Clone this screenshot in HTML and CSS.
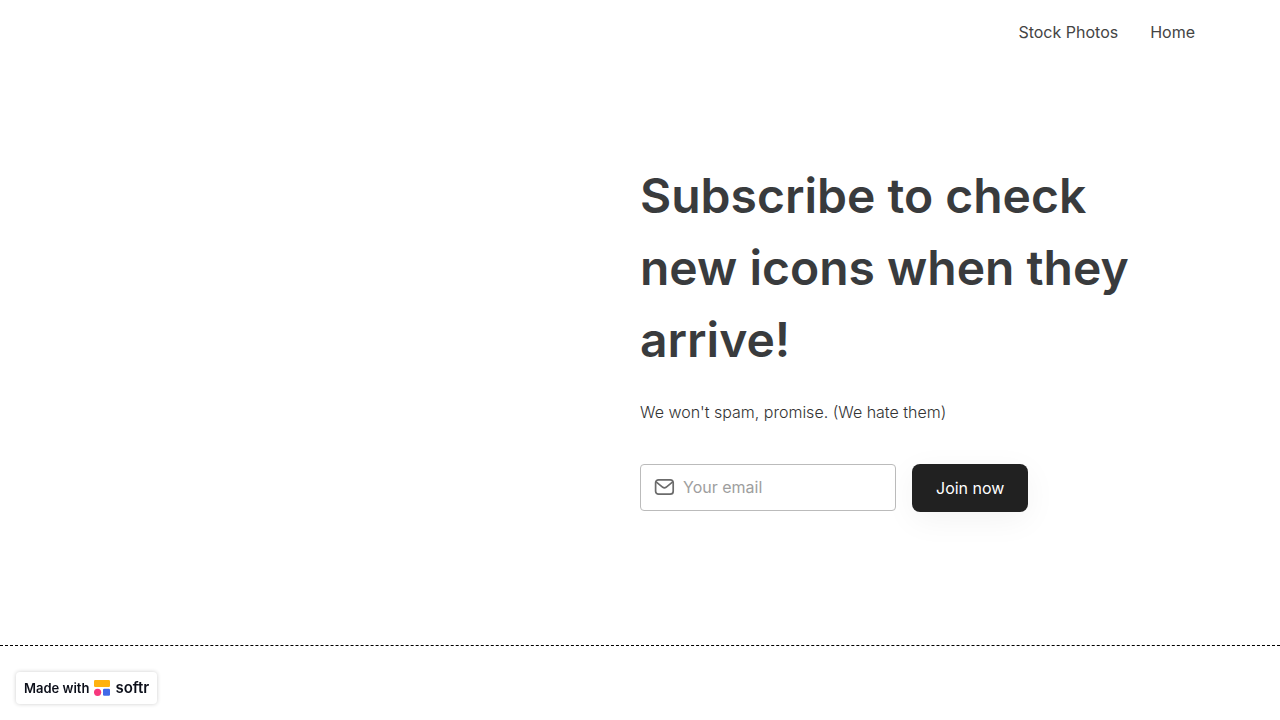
FILE: index.html
```html
<!DOCTYPE html>
<html lang="en">
<head>
    <meta charset="UTF-8">
    <meta name="viewport" content="width=device-width, initial-scale=1.0">
    <title>Subscribe</title>
    <link rel="stylesheet" href="styles.css">
</head>
<body>

    <header class="header">
        <nav class="nav">
            <a href="#">Stock Photos</a>
            <a href="#">Home</a>
        </nav>
    </header>

    <main class="hero">
        <div class="hero-content">
            <h1>Subscribe to check new icons when they arrive!</h1>
            <p>We won't spam, promise. (We hate them)</p>

            <form class="subscribe-form">
                <label class="email-field" for="email">
                    <svg width="22" height="22" viewBox="0 0 22 22" fill="none" stroke="#6b6b6b" stroke-width="1.7" stroke-linejoin="round" stroke-linecap="round" aria-hidden="true">
                        <rect x="2.6" y="3.8" width="17.6" height="14.4" rx="3"/>
                        <path d="M3.4 6.2l6.4 5.1q1.6 1.2 3.2 0l6.4-5.1"/>
                    </svg>
                    <input type="email" id="email" placeholder="Your email" aria-label="Your email" required>
                </label>
                <button type="submit" class="join-btn">Join now</button>
            </form>
        </div>
    </main>

    <footer class="footer"></footer>

    <!-- Badge stays in the corner while scrolling -->
    <a class="badge" href="#">
        <span>Made with</span>
        <svg width="16" height="16" viewBox="0 0 16 16" aria-hidden="true">
            <rect width="16" height="7" rx="1.2" fill="#ffb20f"/>
            <circle cx="3.6" cy="12.3" r="3.6" fill="#f7387d"/>
            <rect x="9" y="8.8" width="7" height="7" rx="1.2" fill="#4169e8"/>
        </svg>
        <span class="badge-name">softr</span>
    </a>

</body>
</html>
```

FILE: styles.css
```css
* {
    box-sizing: border-box;
}
body {
    font-family: Inter, "Liberation Sans", sans-serif;
    font-size: 16px;
    line-height: 24px;
    margin: 0;
    background-color: white;
    color: #393b3d;
}
.header {
    padding: 20px 85px;
}
.nav {
    display: flex;
    justify-content: flex-end;
    gap: 32px;
}
.nav a {
    color: #444;
    text-decoration: none;
}
.hero {
    display: grid;
    grid-template-columns: 1fr 1fr;
    padding: 96px 0 133px;
}
.hero-content {
    grid-column: 2;
    padding-right: 120px;
}
.hero h1 {
    margin: 0 0 24px;
    font-size: 48px;
    font-weight: 600;
    line-height: 72px;
}
.hero p {
    margin: 0 0 40px;
    font-weight: 300;
    color: #333;
}
.subscribe-form {
    display: flex;
    align-items: flex-start;
    gap: 16px;
}
.email-field {
    display: flex;
    align-items: center;
    gap: 8px;
    width: 256px;
    height: 47px;
    padding: 0 12px 1px;
    border: 1px solid #bbb;
    border-radius: 4px;
}
.email-field svg {
    flex: none;
}
.email-field input {
    flex: 1;
    min-width: 0;
    padding: 0;
    border: none;
    outline: none;
    background: none;
    font: inherit;
    color: #333;
}
.email-field input::placeholder {
    color: #9e9e9e;
}
.join-btn {
    height: 48px;
    padding: 0 24px;
    border: none;
    border-radius: 8px;
    background-color: #212121;
    color: white;
    font: inherit;
    box-shadow: 0 8px 32px rgba(0, 0, 0, 0.05);
    cursor: pointer;
}
.footer {
    border-top: 1px dashed black;
}
.badge {
    position: fixed;
    left: 16px;
    bottom: 16px;
    display: flex;
    align-items: center;
    gap: 5px;
    height: 32px;
    padding: 0 8px;
    border-radius: 4px;
    background-color: white;
    box-shadow: 0 0 4px rgba(0, 0, 0, 0.2);
    color: #0c0f1a;
    font-size: 13px;
    font-weight: 600;
    text-decoration: none;
}
.badge-name {
    font-size: 15px;
}
```
